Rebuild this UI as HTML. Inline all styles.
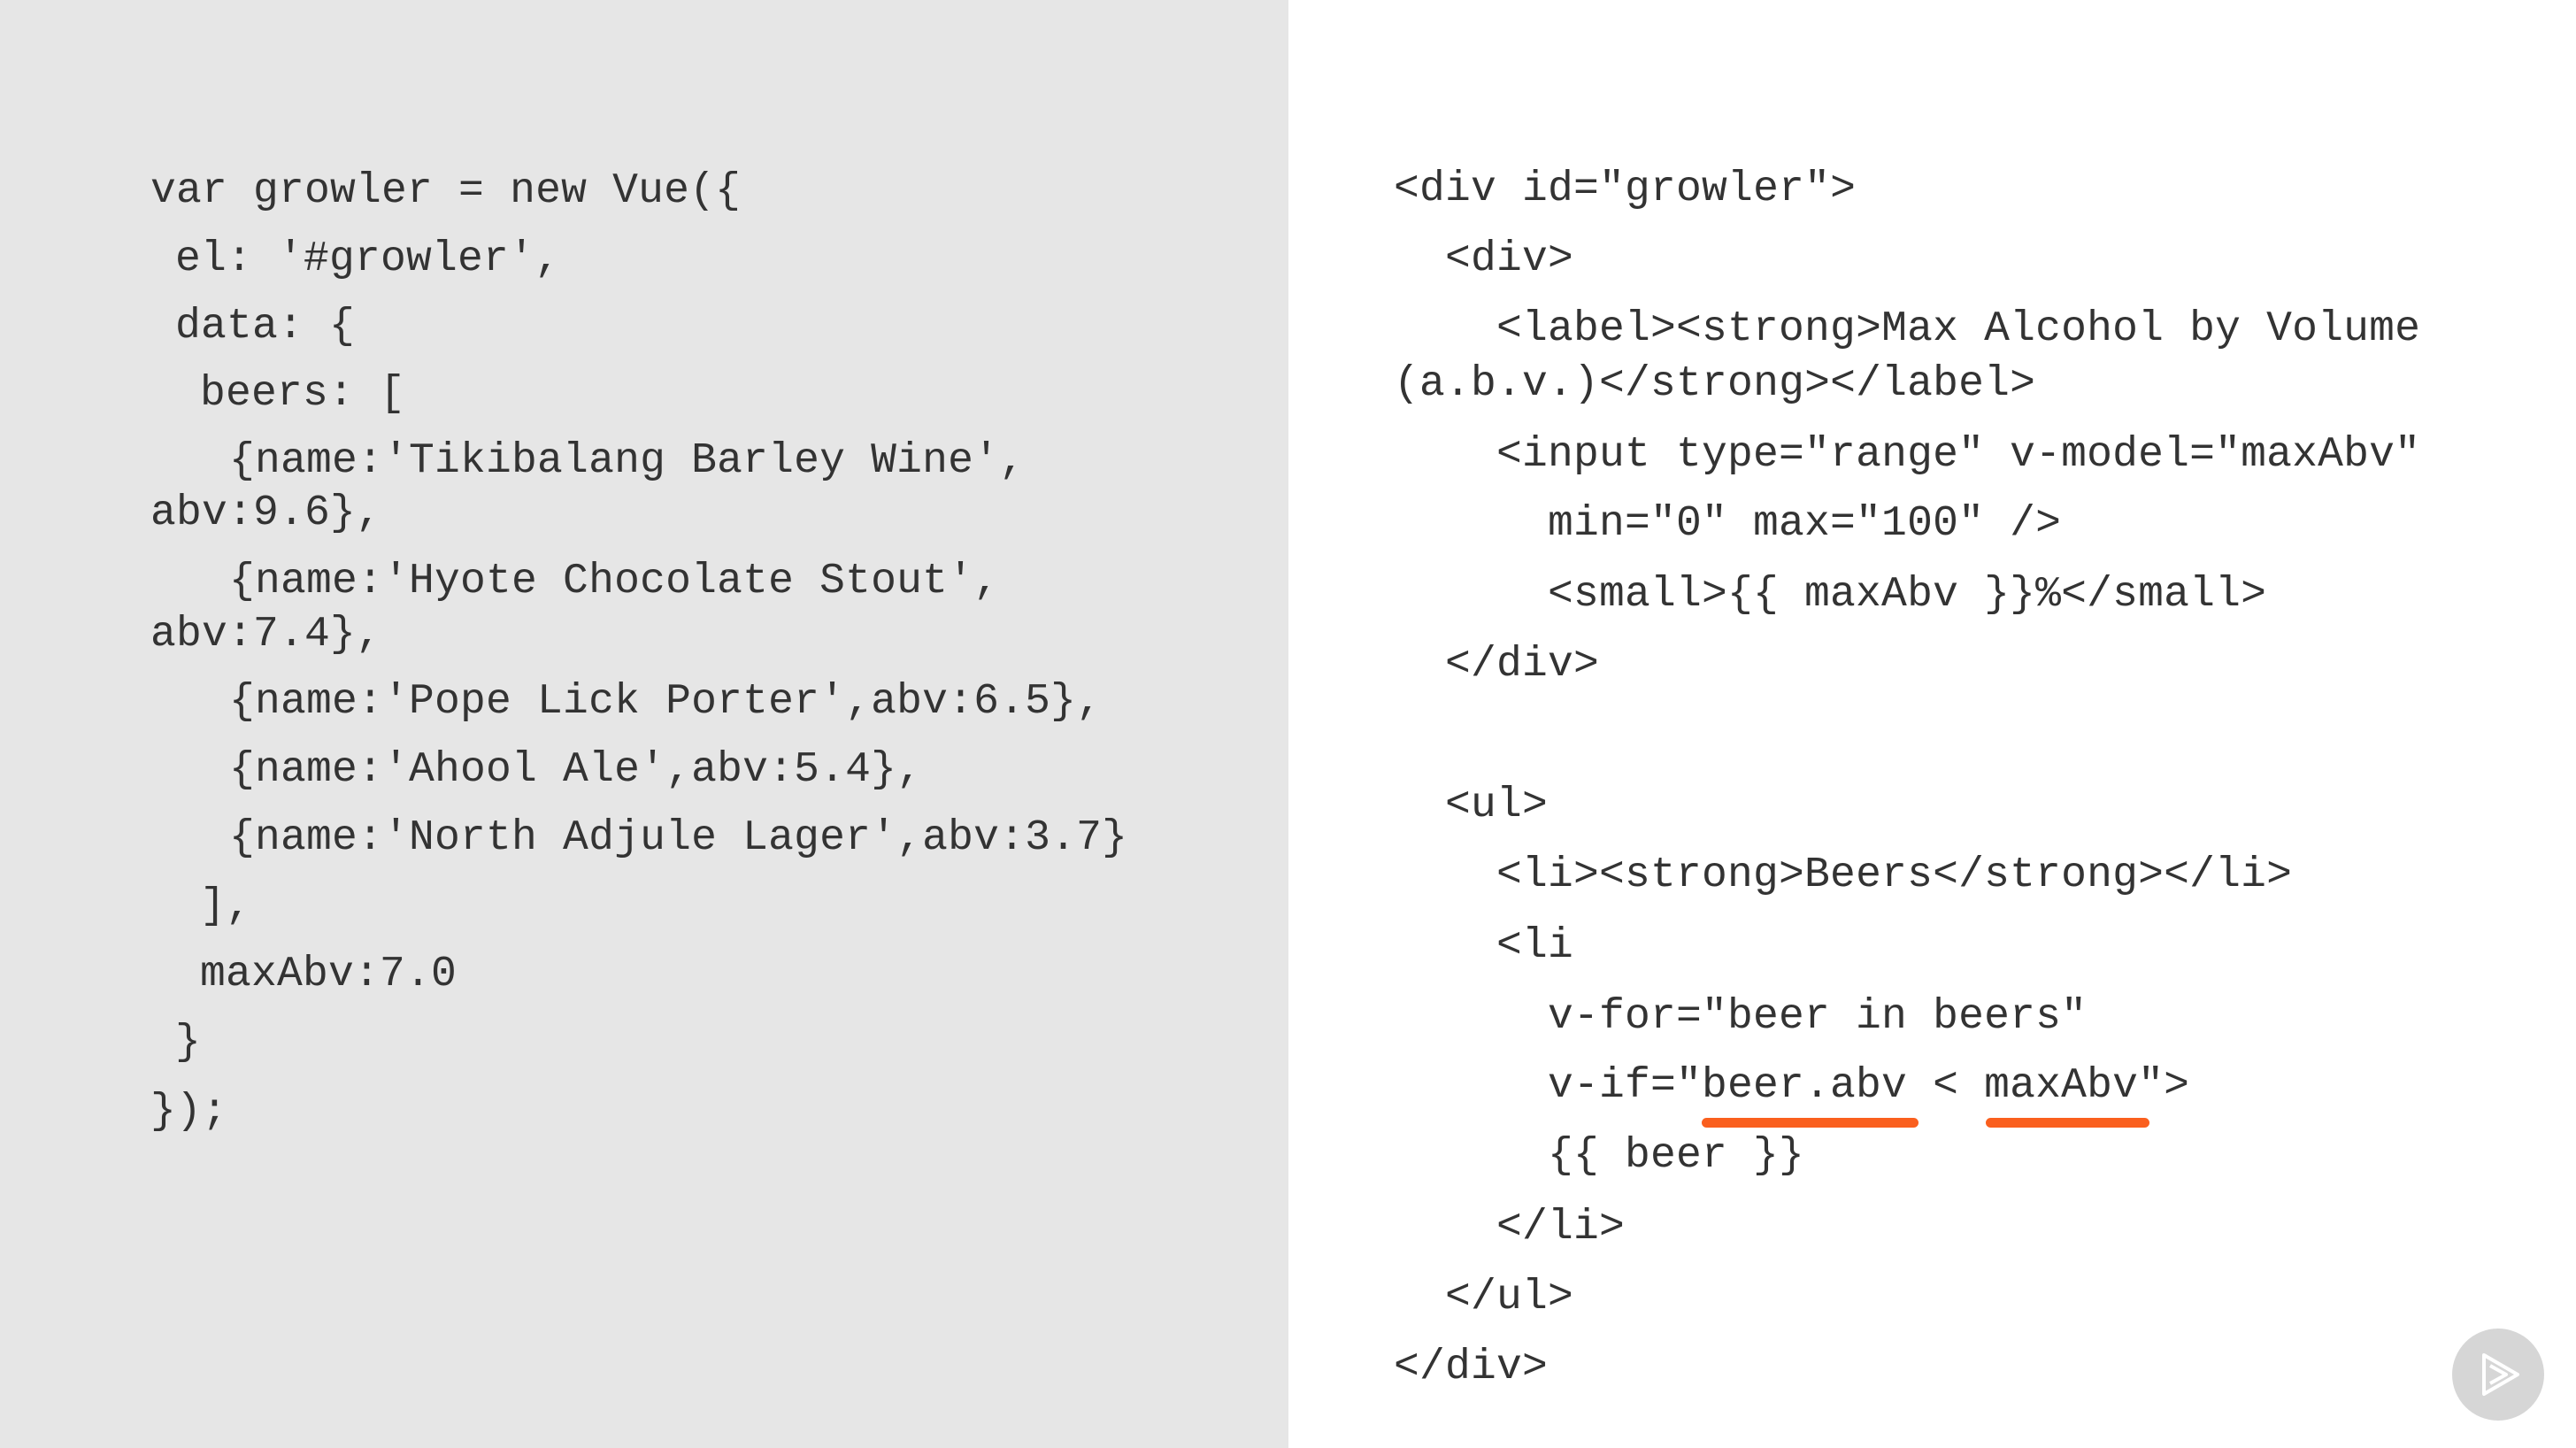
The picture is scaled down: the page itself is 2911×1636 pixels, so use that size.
<!DOCTYPE html>
<html><head><meta charset="utf-8"><style>
html,body{margin:0;padding:0;width:2911px;height:1636px;overflow:hidden;background:#fff}
#l{position:absolute;left:0;top:0;width:1456px;height:1636px;background:#e6e6e6}
.t{position:absolute;font-family:"Liberation Mono",monospace;font-size:48px;line-height:60px;color:#333;white-space:pre;letter-spacing:0.2px}
.u{position:absolute;height:11px;background:#fa5f1e;border-radius:6px}
</style></head><body>
<div id="l"></div>
<div class="t" style="left:170px;top:186px">var growler = new Vue({</div>
<div class="t" style="left:198px;top:263px">el: '#growler',</div>
<div class="t" style="left:198px;top:339px">data: {</div>
<div class="t" style="left:226px;top:415px">beers: [</div>
<div class="t" style="left:259px;top:491px">{name:'Tikibalang Barley Wine',</div>
<div class="t" style="left:170px;top:550px">abv:9.6},</div>
<div class="t" style="left:259px;top:627px">{name:'Hyote Chocolate Stout',</div>
<div class="t" style="left:170px;top:687px">abv:7.4},</div>
<div class="t" style="left:259px;top:763px">{name:'Pope Lick Porter',abv:6.5},</div>
<div class="t" style="left:259px;top:840px">{name:'Ahool Ale',abv:5.4},</div>
<div class="t" style="left:259px;top:917px">{name:'North Adjule Lager',abv:3.7}</div>
<div class="t" style="left:226px;top:994px">],</div>
<div class="t" style="left:226px;top:1071px">maxAbv:7.0</div>
<div class="t" style="left:198px;top:1148px">}</div>
<div class="t" style="left:170px;top:1226px">});</div>

<div class="t" style="left:1575px;top:184px">&lt;div id="growler"&gt;</div>
<div class="t" style="left:1633px;top:263px">&lt;div&gt;</div>
<div class="t" style="left:1691px;top:342px">&lt;label&gt;&lt;strong&gt;Max Alcohol by Volume</div>
<div class="t" style="left:1575px;top:404px">(a.b.v.)&lt;/strong&gt;&lt;/label&gt;</div>
<div class="t" style="left:1691px;top:484px">&lt;input type="range" v-model="maxAbv"</div>
<div class="t" style="left:1749px;top:562px">min="0" max="100" /&gt;</div>
<div class="t" style="left:1749px;top:642px">&lt;small&gt;{{ maxAbv }}%&lt;/small&gt;</div>
<div class="t" style="left:1633px;top:721px">&lt;/div&gt;</div>
<div class="t" style="left:1633px;top:880px">&lt;ul&gt;</div>
<div class="t" style="left:1691px;top:959px">&lt;li&gt;&lt;strong&gt;Beers&lt;/strong&gt;&lt;/li&gt;</div>
<div class="t" style="left:1691px;top:1039px">&lt;li</div>
<div class="t" style="left:1749px;top:1119px">v-for="beer in beers"</div>
<div class="t" style="left:1749px;top:1197px">v-if="beer.abv &lt; maxAbv"&gt;</div>
<div class="t" style="left:1749px;top:1276px">{{ beer }}</div>
<div class="t" style="left:1691px;top:1357px">&lt;/li&gt;</div>
<div class="t" style="left:1633px;top:1436px">&lt;/ul&gt;</div>
<div class="t" style="left:1575px;top:1515px">&lt;/div&gt;</div>
<div class="u" style="left:1923px;top:1263px;width:245px"></div>
<div class="u" style="left:2244px;top:1263px;width:185px"></div>
<svg style="position:absolute;left:2771px;top:1501px" width="104" height="104" viewBox="0 0 104 104">
<circle cx="52" cy="52" r="52" fill="#d6d6d6"/>
<path d="M36 30 L74 52 L36 74 Z M43 42 L61 52 L43 62" fill="none" stroke="#fff" stroke-width="4" stroke-linejoin="round"/>
</svg>
</body></html>
